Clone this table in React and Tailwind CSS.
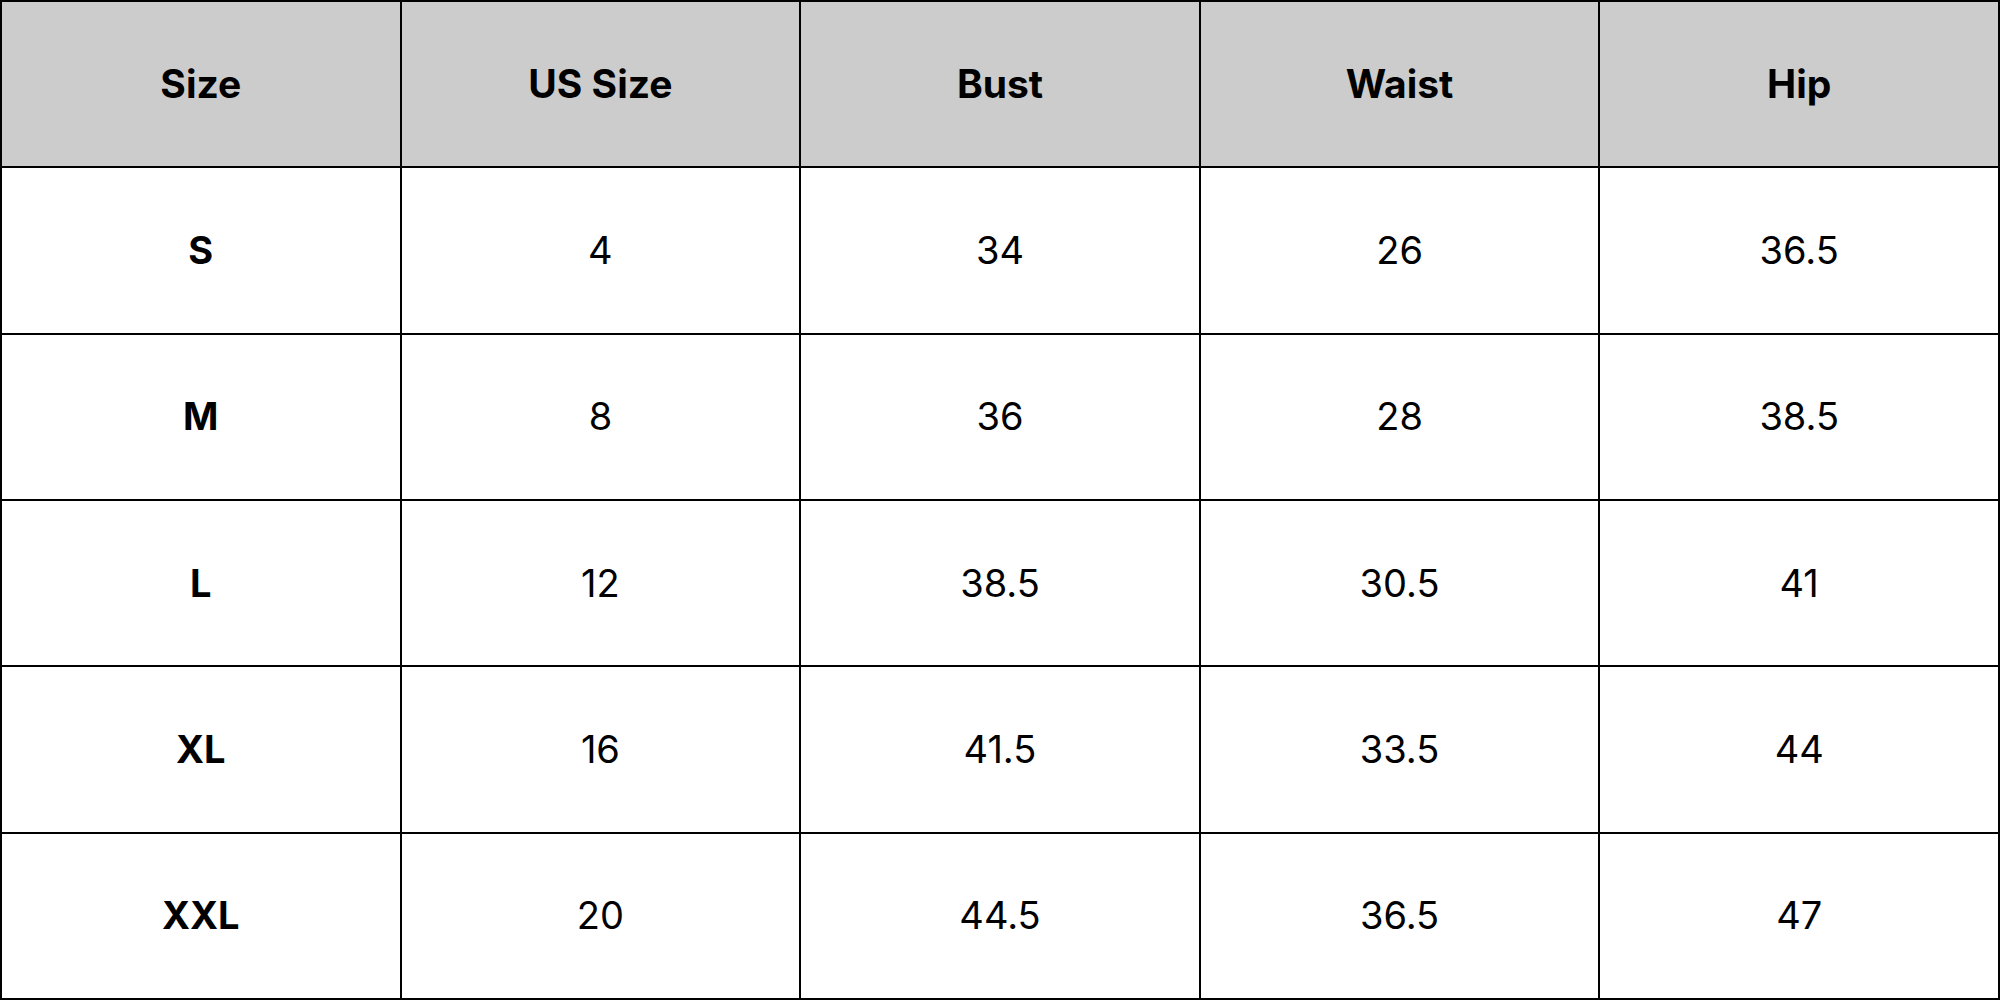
import React from 'react';

const headers = ['Size', 'US Size', 'Bust', 'Waist', 'Hip'];

const rows = [
  ['S', '4', '34', '26', '36.5'],
  ['M', '8', '36', '28', '38.5'],
  ['L', '12', '38.5', '30.5', '41'],
  ['XL', '16', '41.5', '33.5', '44'],
  ['XXL', '20', '44.5', '36.5', '47'],
];

export default function App() {
  return (
    <div
      className="w-[2000px] h-[1000px] bg-white text-black grid grid-cols-5 grid-rows-6 border-t-2 border-l-2 border-black"
      style={{ fontFamily: 'Inter, "Open Sans", sans-serif' }}
    >
      {/* Header row */}
      {headers.map((h) => (
        <div
          key={h}
          className="bg-[#cccccc] border-r-2 border-b-2 border-black flex items-center justify-center text-[39px] font-bold"
        >
          {h}
        </div>
      ))}

      {/* Body rows */}
      {rows.map((row) =>
        row.map((cell, i) => (
          <div
            key={row[0] + i}
            className={
              'border-r-2 border-b-2 border-black flex items-center justify-center text-[38px] ' +
              (i === 0 ? 'font-bold' : 'font-normal')
            }
          >
            {cell}
          </div>
        ))
      )}
    </div>
  );
}
